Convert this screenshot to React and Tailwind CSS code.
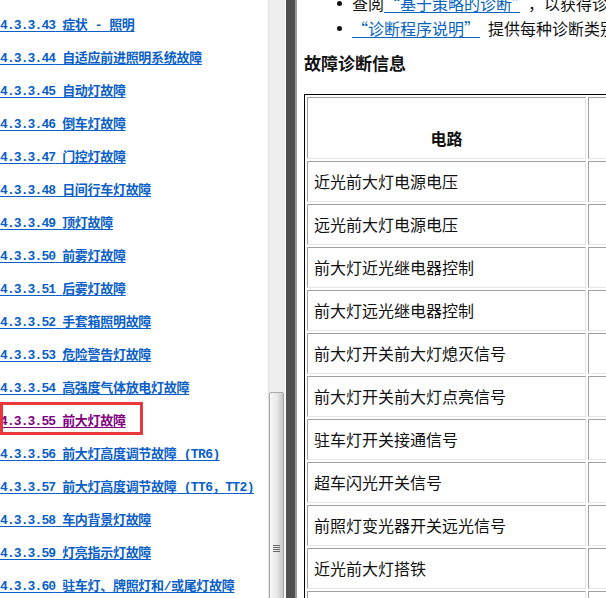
import React from 'react';

const tocItems = [
  ['4.3.3.43', '症状 - 照明'],
  ['4.3.3.44', '自适应前进照明系统故障'],
  ['4.3.3.45', '自动灯故障'],
  ['4.3.3.46', '倒车灯故障'],
  ['4.3.3.47', '门控灯故障'],
  ['4.3.3.48', '日间行车灯故障'],
  ['4.3.3.49', '顶灯故障'],
  ['4.3.3.50', '前雾灯故障'],
  ['4.3.3.51', '后雾灯故障'],
  ['4.3.3.52', '手套箱照明故障'],
  ['4.3.3.53', '危险警告灯故障'],
  ['4.3.3.54', '高强度气体放电灯故障'],
  ['4.3.3.55', '前大灯故障'],
  ['4.3.3.56', '前大灯高度调节故障 (TR6)'],
  ['4.3.3.57', '前大灯高度调节故障 (TT6，TT2)'],
  ['4.3.3.58', '车内背景灯故障'],
  ['4.3.3.59', '灯亮指示灯故障'],
  ['4.3.3.60', '驻车灯、牌照灯和/或尾灯故障'],
];

const circuits = [
  '近光前大灯电源电压',
  '远光前大灯电源电压',
  '前大灯近光继电器控制',
  '前大灯远光继电器控制',
  '前大灯开关前大灯熄灭信号',
  '前大灯开关前大灯点亮信号',
  '驻车灯开关接通信号',
  '超车闪光开关信号',
  '前照灯变光器开关远光信号',
  '近光前大灯搭铁',
  '远光前大灯搭铁',
];

const CURRENT = '4.3.3.55';

// Split a title into runs of wide (CJK) and narrow (Latin) characters so
// each run gets its own face: half-width Latin, full-width ideographs.
function splitRuns(text) {
  const runs = [];
  for (const ch of text) {
    const wide = /[\u3000-\u9fff\uff00-\uffef]/.test(ch);
    const last = runs[runs.length - 1];
    if (last && last.wide === wide) last.text += ch;
    else runs.push({ wide, text: ch });
  }
  return runs;
}

function TocEntry({ num, title }) {
  const current = num === CURRENT;
  return (
    <div className="relative flex h-[33px] items-center whitespace-nowrap">
      <a
        href="#"
        className={
          current
            ? 'font-bold text-[#800080] underline decoration-1 underline-offset-[2px]'
            : 'font-bold text-[#0a5fc8] underline decoration-1 underline-offset-[2px]'
        }
      >
        <span className="font-['Liberation_Mono',monospace] text-[13px] tracking-[-0.9px]">{num} </span>
        {splitRuns(title).map((r, i) =>
          r.wide ? (
            <span key={i} className="font-['Noto_Sans_CJK_SC',sans-serif] text-[13px] tracking-[-0.3px]">
              {r.text}
            </span>
          ) : (
            <span key={i} className="font-['Liberation_Mono',monospace] text-[13px] tracking-[-0.6px]">
              {r.text}
            </span>
          )
        )}
      </a>
      {current && (
        <span className="pointer-events-none absolute left-0 top-[-1px] h-[33px] w-[143px] border-[3px] border-[#e9383c]" />
      )}
    </div>
  );
}

function ScrollBar() {
  return (
    <div className="flex w-[18px] shrink-0 flex-col border-x border-l-[#e2e2e2] border-r-[#fafafa] bg-[#eeeeee]">
      <div className="h-[392px] shrink-0" />
      <div className="flex h-[312px] w-[15px] shrink-0 flex-col items-center justify-center gap-[1px] rounded-[2px] border border-[#a8a8a8] bg-linear-to-r from-[#f6f6f6] via-[#e9e9e9] to-[#c6c6c6]">
        <span className="h-[1px] w-[7px] bg-[#666]" />
        <span className="h-[1px] w-[7px] bg-[#666]" />
        <span className="h-[1px] w-[7px] bg-[#666]" />
        <span className="h-[1px] w-[7px] bg-[#666]" />
      </div>
    </div>
  );
}

function Bullet() {
  return <span className="ml-[40px] h-[5px] w-[5px] shrink-0 rounded-full bg-[#111]" />;
}

export default function App() {
  return (
    <div className="flex h-[598px] w-[606px] overflow-hidden bg-white">
      {/* contents pane */}
      <div className="w-[268px] shrink-0 overflow-hidden pt-[7px]">
        {tocItems.map(([num, title]) => (
          <TocEntry key={num} num={num} title={title} />
        ))}
      </div>
      <ScrollBar />

      {/* splitter */}
      <div className="w-[9px] shrink-0 bg-[#4e4e4e]" />
      <div className="w-[2px] shrink-0 bg-[#9c9c9c]" />

      {/* topic pane */}
      <div className="min-w-0 flex-1 overflow-hidden font-['Noto_Sans_CJK_SC',sans-serif] text-[16px] text-[#111]">
        <ul className="-mt-[9px] whitespace-nowrap">
          <li className="flex h-[25px] items-center leading-[25px]">
            <Bullet />
            <span className="ml-[10px]">
              查阅<a href="#" className="text-[#0563c1] underline underline-offset-[2px]">“基于策略的诊断”</a>
              <span className="ml-[8px]">，以获得诊断系统概述</span>
            </span>
          </li>
          <li className="flex h-[25px] items-center leading-[25px]">
            <Bullet />
            <span className="ml-[10px]">
              <a href="#" className="text-[#0563c1] underline underline-offset-[2px]">“诊断程序说明”</a>
              <span className="ml-[8px]">提供每种诊断类别的说明</span>
            </span>
          </li>
        </ul>

        <h3 className="ml-[7px] mt-[9px] h-[25px] text-[17px] font-bold leading-[25px]">故障诊断信息</h3>

        <table className="ml-[7px] mt-[19px] w-[487px] table-fixed border-separate border-spacing-[2px] border border-black">
          <colgroup>
            <col className="w-[279px]" />
            <col className="w-[200px]" />
          </colgroup>
          <thead>
            <tr>
              <th className="border border-b-[#e6e6e6] border-l-[#a0a0a0] border-r-[#e6e6e6] border-t-[#a0a0a0] pb-[7px] pt-[28px] text-center font-bold leading-[25px]">
                电路
              </th>
              <th className="border border-b-[#e6e6e6] border-l-[#a0a0a0] border-r-[#e6e6e6] border-t-[#a0a0a0]" />
            </tr>
          </thead>
          <tbody>
            {circuits.map((c) => (
              <tr key={c}>
                <td className="h-[41px] whitespace-nowrap border border-b-[#e6e6e6] border-l-[#a0a0a0] border-r-[#e6e6e6] border-t-[#a0a0a0] px-[6px] py-[7px] leading-[25px]">
                  {c}
                </td>
                <td className="h-[41px] border border-b-[#e6e6e6] border-l-[#a0a0a0] border-r-[#e6e6e6] border-t-[#a0a0a0]" />
              </tr>
            ))}
          </tbody>
        </table>
      </div>
    </div>
  );
}
